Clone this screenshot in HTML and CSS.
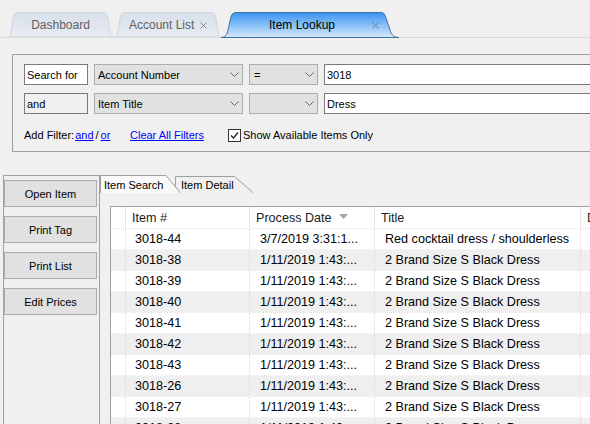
FILE: index.html
```html
<!DOCTYPE html>
<html>
<head>
<meta charset="utf-8">
<title>Item Lookup</title>
<link rel="stylesheet" href="styles.css">
</head>
<body>
<div class="app">
  <div class="tabstrip">
    <div class="tab tab-dash">
      <svg class="tab-bg" width="107" height="25" viewBox="0 0 107 25">
        <defs><linearGradient id="g1" x1="0" y1="0" x2="0" y2="1"><stop offset="0" stop-color="#d8e0eb"/><stop offset="1" stop-color="#e8ecf2"/></linearGradient></defs>
        <path d="M0.5,25 C2.5,25 3.5,23 4,20 L6.5,4 Q7.2,0.5 11,0.5 L96,0.5 Q99.8,0.5 100.5,4 L103,20 C103.5,23 104.5,25 106.5,25 Z" fill="url(#g1)" stroke="#cfd6df"/>
      </svg>
      <span class="tab-label">Dashboard</span>
    </div>
    <div class="tab tab-acct">
      <svg class="tab-bg" width="108" height="25" viewBox="0 0 108 25">
        <defs><linearGradient id="g2" x1="0" y1="0" x2="0" y2="1"><stop offset="0" stop-color="#d8e0eb"/><stop offset="1" stop-color="#e8ecf2"/></linearGradient></defs>
        <path d="M0.5,25 C2.5,25 3.5,23 4,20 L6.5,4 Q7.2,0.5 11,0.5 L97,0.5 Q100.8,0.5 101.5,4 L104,20 C104.5,23 105.5,25 107.5,25 Z" fill="url(#g2)" stroke="#cfd6df"/>
      </svg>
      <span class="tab-label">Account List</span>
      <svg class="tab-close close-acct" width="7" height="7" viewBox="0 0 7 7"><path d="M0.5,0.5 L6.5,6.5 M6.5,0.5 L0.5,6.5" stroke="#808080" stroke-width="1"/></svg>
    </div>
    <div class="tab tab-lookup">
      <svg class="tab-bg" width="178" height="26" viewBox="0 0 178 26">
        <defs><linearGradient id="g3" x1="0" y1="0" x2="0" y2="1"><stop offset="0" stop-color="#3a94f1"/><stop offset="0.55" stop-color="#8fc3f7"/><stop offset="1" stop-color="#d6e9fb"/></linearGradient></defs>
        <path d="M0,25.5 C4,25.5 6,23 7,18 L10,4.5 Q11,0.5 15,0.5 L160,0.5 Q163.5,0.5 164.5,4.5 L169,18 C170.5,23 173,25.5 178,25.5 Z" fill="url(#g3)" stroke="#40709f"/>
      </svg>
      <span class="tab-label">Item Lookup</span>
      <svg class="tab-close close-lookup" width="7" height="7" viewBox="0 0 7 7"><path d="M0.5,0.5 L6.5,6.5 M6.5,0.5 L0.5,6.5" stroke="#6a7f98" stroke-width="1"/></svg>
    </div>
  </div>

  <div class="filter-box">
    <div class="frow">
      <div class="fld fld-label">Search for</div>
      <div class="combo combo-field"><span>Account Number</span><svg class="chev" width="9" height="5" viewBox="0 0 9 5"><polyline points="0.5,0.5 4.5,4.5 8.5,0.5" fill="none" stroke="#606060"/></svg></div>
      <div class="combo combo-op"><span>=</span><svg class="chev" width="9" height="5" viewBox="0 0 9 5"><polyline points="0.5,0.5 4.5,4.5 8.5,0.5" fill="none" stroke="#606060"/></svg></div>
      <div class="fld fld-text">3018</div>
    </div>
    <div class="frow">
      <div class="fld fld-label fld-ro">and</div>
      <div class="combo combo-field"><span>Item Title</span><svg class="chev" width="9" height="5" viewBox="0 0 9 5"><polyline points="0.5,0.5 4.5,4.5 8.5,0.5" fill="none" stroke="#606060"/></svg></div>
      <div class="combo combo-op"><span></span><svg class="chev" width="9" height="5" viewBox="0 0 9 5"><polyline points="0.5,0.5 4.5,4.5 8.5,0.5" fill="none" stroke="#606060"/></svg></div>
      <div class="fld fld-text">Dress</div>
    </div>
    <div class="factions">
      <div class="addf">Add Filter:<a class="lnk lnk-and">and</a><span class="slash">/</span><a class="lnk">or</a></div>
      <div class="clearf"><a class="lnk">Clear All Filters</a></div>
      <div class="chk">
        <span class="box"><svg width="11" height="11" viewBox="0 0 11 11"><polyline points="2,5.5 4.5,8 9,2.5" fill="none" stroke="#222" stroke-width="1.3"/></svg></span>
        <span>Show Available Items Only</span>
      </div>
    </div>
  </div>

  <div class="main">
    <div class="side">
      <div class="btn">Open Item</div>
      <div class="btn">Print Tag</div>
      <div class="btn">Print List</div>
      <div class="btn">Edit Prices</div>
    </div>
    <div class="tabctl">
      <div class="subtabs">
        <div class="stab stab-search">
          <svg class="tab-bg" width="81" height="18" viewBox="0 0 81 18"><path d="M0.5,18 L0.5,0.5 L66,0.5 L80.5,18" fill="#f9f9f9" stroke="#a0a0a0"/></svg>
          <span class="tab-label">Item Search</span>
        </div>
        <div class="stab stab-detail">
          <svg class="tab-bg" width="79" height="18" viewBox="0 0 79 18"><path d="M0.5,18 L0.5,1.5 L59.5,1.5 L78.5,18" fill="#f0f0f0" stroke="#a0a0a0"/></svg>
          <span class="tab-label">Item Detail</span>
        </div>
      </div>
      <div class="tabpage">
        <div class="grid">
          <div class="grow ghead">
            <div class="c c0"></div>
            <div class="c c1">Item #</div>
            <div class="c c2">Process Date<svg class="sort" width="9" height="5" viewBox="0 0 9 5"><polygon points="0,0 9,0 4.5,5" fill="#a6a6a6"/></svg></div>
            <div class="c c3">Title</div>
            <div class="c c4">D</div>
          </div>
          <div class="grow"><div class="c c0"></div><div class="c c1">3018-44</div><div class="c c2">3/7/2019 3:31:1...</div><div class="c c3">Red cocktail dress / shoulderless</div><div class="c c4"></div></div>
          <div class="grow alt"><div class="c c0"></div><div class="c c1">3018-38</div><div class="c c2">1/11/2019 1:43:...</div><div class="c c3">2 Brand Size S Black Dress</div><div class="c c4"></div></div>
          <div class="grow"><div class="c c0"></div><div class="c c1">3018-39</div><div class="c c2">1/11/2019 1:43:...</div><div class="c c3">2 Brand Size S Black Dress</div><div class="c c4"></div></div>
          <div class="grow alt"><div class="c c0"></div><div class="c c1">3018-40</div><div class="c c2">1/11/2019 1:43:...</div><div class="c c3">2 Brand Size S Black Dress</div><div class="c c4"></div></div>
          <div class="grow"><div class="c c0"></div><div class="c c1">3018-41</div><div class="c c2">1/11/2019 1:43:...</div><div class="c c3">2 Brand Size S Black Dress</div><div class="c c4"></div></div>
          <div class="grow alt"><div class="c c0"></div><div class="c c1">3018-42</div><div class="c c2">1/11/2019 1:43:...</div><div class="c c3">2 Brand Size S Black Dress</div><div class="c c4"></div></div>
          <div class="grow"><div class="c c0"></div><div class="c c1">3018-43</div><div class="c c2">1/11/2019 1:43:...</div><div class="c c3">2 Brand Size S Black Dress</div><div class="c c4"></div></div>
          <div class="grow alt"><div class="c c0"></div><div class="c c1">3018-26</div><div class="c c2">1/11/2019 1:43:...</div><div class="c c3">2 Brand Size S Black Dress</div><div class="c c4"></div></div>
          <div class="grow"><div class="c c0"></div><div class="c c1">3018-27</div><div class="c c2">1/11/2019 1:43:...</div><div class="c c3">2 Brand Size S Black Dress</div><div class="c c4"></div></div>
          <div class="grow alt"><div class="c c0"></div><div class="c c1">3018-28</div><div class="c c2">1/11/2019 1:43:...</div><div class="c c3">2 Brand Size S Black Dress</div><div class="c c4"></div></div>
        </div>
      </div>
    </div>
  </div>
</div>
</body>
</html>
```
FILE: styles.css
```css
* { box-sizing: border-box; }
html, body {
  margin: 0;
  padding: 0;
  width: 590px;
  height: 424px;
  overflow: hidden;
  background: #f0f0f0;
  font-family: "Liberation Sans", Arial, sans-serif;
  color: #000;
}
.app { width: 590px; height: 424px; overflow: hidden; }

/* top tabs */
.tabstrip {
  height: 38px;
  border-bottom: 1px solid #dadada;
  display: flex;
  align-items: flex-end;
  padding-left: 7px;
}
.tab {
  position: relative;
  height: 25px;
  display: flex;
  align-items: center;
  font-size: 12px;
  color: #646060;
  flex: none;
}
.tab-bg { position: absolute; left: 0; top: 0; z-index: 0; }
.tab-label, .tab-close { position: relative; z-index: 1; }
.tab-dash { width: 107px; justify-content: center; padding-top: 1px; }
.tab-acct { width: 108px; padding-left: 15px; padding-top: 1px; }
.tab-lookup { width: 178px; margin-left: -1px; padding-left: 48px; color: #000; z-index: 2; height: 26px; margin-bottom: -1px; }
.close-acct { margin-left: auto; margin-right: 15px; }
.close-lookup { margin-left: auto; margin-right: 20px; }

/* filter group */
.filter-box {
  margin: 16px 0 0 12px;
  width: 640px;
  border: 1px solid #a0a0a0;
  padding: 9px 0 8px 11px;
  font-size: 11px;
}
.frow { display: flex; gap: 6px; height: 21px; }
.frow + .frow { margin-top: 8px; }
.fld {
  border: 1px solid #7a7a7a;
  background: #fff;
  padding-left: 2px;
  display: flex;
  align-items: center;
}
.fld-label { width: 64px; }
.fld-ro { background: #f0f0f0; }
.fld-text { flex: 1; }
.combo {
  border: 1px solid #adadad;
  background: #e1e1e1;
  padding: 0 3px 0 3px;
  display: flex;
  align-items: center;
  justify-content: space-between;
}
.combo-field { width: 149px; }
.combo-op { width: 69px; padding-left: 4px; }
.chev { flex: none; }

.factions { display: flex; align-items: center; height: 16px; margin-top: 13px; }
.addf { width: 106px; display: flex; align-items: center; }
.lnk { color: #0000ff; text-decoration: underline; }
.lnk-and { margin-left: 1px; }
.slash { margin: 0 2px 0 2px; }
.clearf { width: 98px; }
.chk { display: flex; align-items: center; }
.box {
  width: 13px; height: 13px;
  border: 1px solid #333;
  background: #fff;
  margin-right: 2px;
  display: flex;
}

/* main area */
.main { display: flex; margin-top: 23px; }
.side {
  width: 97px;
  margin-left: 3px;
  height: 260px;
  border: 1px solid #a0a0a0;
  padding-top: 4px;
  flex: none;
}
.btn {
  width: 93px;
  height: 27px;
  border: 1px solid #adadad;
  background: #e1e1e1;
  display: flex;
  align-items: center;
  justify-content: center;
  font-size: 11px;
  margin-bottom: 9px;
}
.tabctl { flex: 1; min-width: 0; }
.subtabs { display: flex; height: 18px; }
.stab {
  position: relative;
  height: 18px;
  font-size: 11px;
  display: flex;
  align-items: center;
  padding-top: 2px;
  flex: none;
}
.stab-search { width: 81px; padding-left: 4px; z-index: 2; }
.stab-detail { width: 79px; margin-left: -6px; padding-left: 6px; z-index: 1; }

.tabpage { padding: 13px 0 0 10px; }
.grid {
  width: 540px;
  border-left: 1px solid #a0a0a0;
  border-top: 1px solid #a0a0a0;
  background: #fff;
  font-size: 12.6px;
}
.grow {
  display: grid;
  grid-template-columns: 14px 124px 125px 206px 70px;
  height: 21px;
  border-top: 1px dotted #e2e2e2;
}
.grow.ghead { border-top: 0; color: #1a1a1a; }
.grow.alt { background: #efefef; border-top-color: #fafafa; }
.c {
  display: flex;
  align-items: center;
  white-space: nowrap;
  overflow: hidden;
  border-left: 1px dotted #dcdcdc;
}
.c0 { border-left: 0; }
.c1 { padding-left: 9px; }
.c2, .c3, .c4 { padding-left: 10px; }
.ghead .c { border-left: 1px solid #e6e6e6; padding-left: 6px; }
.ghead .c0 { border-left: 0; }
.sort { margin-left: 7px; margin-top: -2px; }
```
